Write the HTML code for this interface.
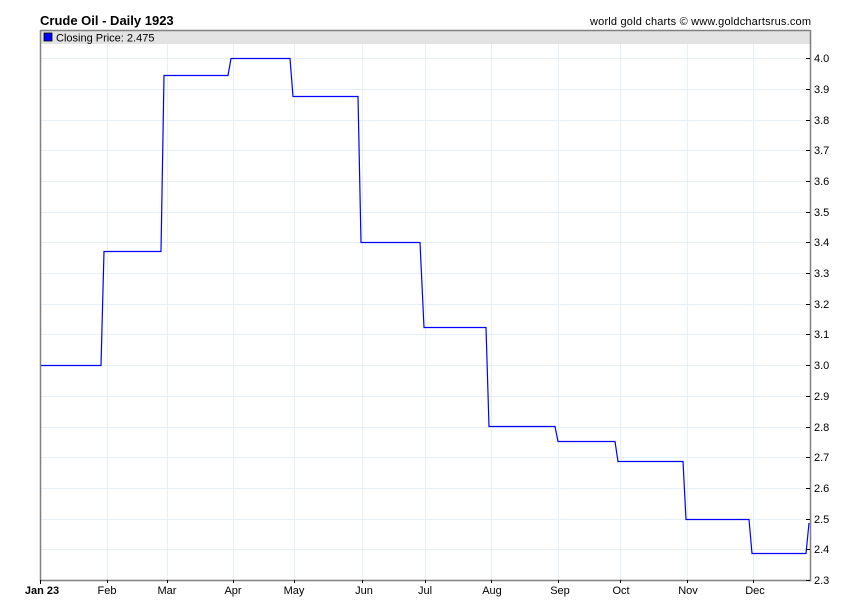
<!DOCTYPE html>
<html><head><meta charset="utf-8"><style>
html,body{margin:0;padding:0;background:#fff;}
svg{display:block;font-family:"Liberation Sans",Arial,sans-serif;}
</style></head><body>
<svg width="850" height="616" viewBox="0 0 850 616" xmlns="http://www.w3.org/2000/svg">
<rect width="850" height="616" fill="#fff"/>
<text x="40" y="25" font-size="13" font-weight="bold" fill="#000">Crude Oil - Daily 1923</text>
<text x="811" y="25" font-size="11" fill="#000" text-anchor="end" textLength="221">world gold charts © www.goldchartsrus.com</text>
<rect x="40" y="30" width="770" height="14" fill="#e3e3e3"/>
<g stroke="#e6f0f8" stroke-width="1">
<line x1="40" y1="58.5" x2="810" y2="58.5"/><line x1="40" y1="89.5" x2="810" y2="89.5"/>
<line x1="40" y1="120.5" x2="810" y2="120.5"/><line x1="40" y1="150.5" x2="810" y2="150.5"/>
<line x1="40" y1="181.5" x2="810" y2="181.5"/><line x1="40" y1="212.5" x2="810" y2="212.5"/>
<line x1="40" y1="242.5" x2="810" y2="242.5"/><line x1="40" y1="273.5" x2="810" y2="273.5"/>
<line x1="40" y1="304.5" x2="810" y2="304.5"/><line x1="40" y1="334.5" x2="810" y2="334.5"/>
<line x1="40" y1="365.5" x2="810" y2="365.5"/><line x1="40" y1="396.5" x2="810" y2="396.5"/>
<line x1="40" y1="427.5" x2="810" y2="427.5"/><line x1="40" y1="457.5" x2="810" y2="457.5"/>
<line x1="40" y1="488.5" x2="810" y2="488.5"/><line x1="40" y1="519.5" x2="810" y2="519.5"/>
<line x1="40" y1="549.5" x2="810" y2="549.5"/>
<line x1="107.5" y1="44" x2="107.5" y2="580"/><line x1="167.5" y1="44" x2="167.5" y2="580"/>
<line x1="233.5" y1="44" x2="233.5" y2="580"/><line x1="294.5" y1="44" x2="294.5" y2="580"/>
<line x1="362.5" y1="44" x2="362.5" y2="580"/><line x1="425.5" y1="44" x2="425.5" y2="580"/>
<line x1="491.5" y1="44" x2="491.5" y2="580"/><line x1="558.5" y1="44" x2="558.5" y2="580"/>
<line x1="620.5" y1="44" x2="620.5" y2="580"/><line x1="687.5" y1="44" x2="687.5" y2="580"/>
<line x1="753.5" y1="44" x2="753.5" y2="580"/>
</g>
<rect x="44" y="33" width="8" height="8" fill="#0000ff" stroke="#000" stroke-width="0.8"/>
<text x="56" y="41.5" font-size="11" fill="#000">Closing Price: 2.475</text>
<polyline fill="none" stroke="#0000ff" stroke-width="1.2" points="40,365.5 101,365.5 104,251.5 161,251.5 164,75.5 228,75.5 231,58.5 290,58.5 293,96.5 358,96.5 361,242.5 420,242.5 424,327.5 486,327.5 489,426.5 555,426.5 558,441.5 615,441.5 618,461.5 683,461.5 686,519.5 749,519.5 752,553.5 806,553.5 809,523"/>
<g stroke="#808080" stroke-width="1.5" fill="none">
<polyline points="40.5,30 40.5,580.5 810.5,580.5 810.5,30.5 40.5,30.5"/>
</g>
<g stroke="#000" stroke-width="1">
<line x1="806" y1="58.5" x2="810" y2="58.5"/><line x1="806" y1="89.5" x2="810" y2="89.5"/>
<line x1="806" y1="120.5" x2="810" y2="120.5"/><line x1="806" y1="150.5" x2="810" y2="150.5"/>
<line x1="806" y1="181.5" x2="810" y2="181.5"/><line x1="806" y1="212.5" x2="810" y2="212.5"/>
<line x1="806" y1="242.5" x2="810" y2="242.5"/><line x1="806" y1="273.5" x2="810" y2="273.5"/>
<line x1="806" y1="304.5" x2="810" y2="304.5"/><line x1="806" y1="334.5" x2="810" y2="334.5"/>
<line x1="806" y1="365.5" x2="810" y2="365.5"/><line x1="806" y1="396.5" x2="810" y2="396.5"/>
<line x1="806" y1="427.5" x2="810" y2="427.5"/><line x1="806" y1="457.5" x2="810" y2="457.5"/>
<line x1="806" y1="488.5" x2="810" y2="488.5"/><line x1="806" y1="519.5" x2="810" y2="519.5"/>
<line x1="806" y1="549.5" x2="810" y2="549.5"/><line x1="806" y1="580.5" x2="810" y2="580.5"/>
<line x1="40.5" y1="580" x2="40.5" y2="584"/><line x1="107.5" y1="580" x2="107.5" y2="583"/>
<line x1="167.5" y1="580" x2="167.5" y2="583"/><line x1="233.5" y1="580" x2="233.5" y2="583"/>
<line x1="294.5" y1="580" x2="294.5" y2="583"/><line x1="362.5" y1="580" x2="362.5" y2="583"/>
<line x1="425.5" y1="580" x2="425.5" y2="583"/><line x1="491.5" y1="580" x2="491.5" y2="583"/>
<line x1="558.5" y1="580" x2="558.5" y2="583"/><line x1="620.5" y1="580" x2="620.5" y2="583"/>
<line x1="687.5" y1="580" x2="687.5" y2="583"/><line x1="753.5" y1="580" x2="753.5" y2="583"/>
</g>
<g font-size="11" fill="#000">
<text x="814" y="62">4.0</text><text x="814" y="93">3.9</text><text x="814" y="124">3.8</text>
<text x="814" y="154">3.7</text><text x="814" y="185">3.6</text><text x="814" y="216">3.5</text>
<text x="814" y="246">3.4</text><text x="814" y="277">3.3</text><text x="814" y="308">3.2</text>
<text x="814" y="338">3.1</text><text x="814" y="369">3.0</text><text x="814" y="400">2.9</text>
<text x="814" y="431">2.8</text><text x="814" y="461">2.7</text><text x="814" y="492">2.6</text>
<text x="814" y="523">2.5</text><text x="814" y="553">2.4</text><text x="814" y="584">2.3</text>
</g>
<g font-size="11" fill="#000" text-anchor="middle">
<text x="42" y="594" font-weight="bold">Jan 23</text>
<text x="107" y="594">Feb</text><text x="167" y="594">Mar</text><text x="233" y="594">Apr</text>
<text x="294" y="594">May</text><text x="364" y="594">Jun</text><text x="425" y="594">Jul</text>
<text x="492" y="594">Aug</text><text x="560" y="594">Sep</text><text x="621" y="594">Oct</text>
<text x="688" y="594">Nov</text><text x="755" y="594">Dec</text>
</g>
</svg>
</body></html>
